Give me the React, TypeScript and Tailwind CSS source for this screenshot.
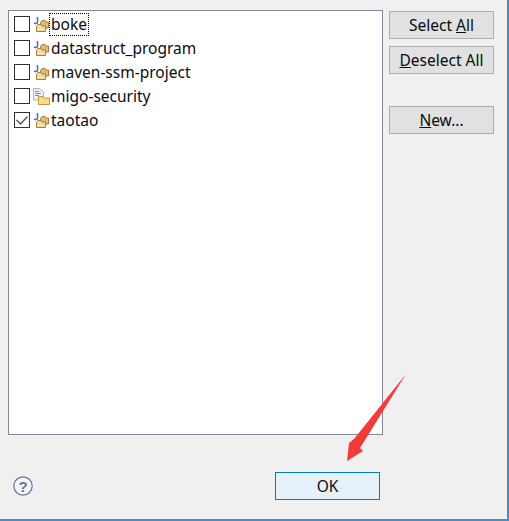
import React from "react";

const JavaFolder = () => (
  <svg width="17" height="17" viewBox="0 0 17 17" className="shrink-0">
    <path d="M4.5 1 L4.5 6 Q4.5 8 2.5 7.5 L1 7" fill="none" stroke="#3f74b5" strokeWidth="1.5" />
    <path d="M7.5 6.5 L9 4.5 H12 L13 6 H15.5 V12 H7.5 Z" fill="#e2bb73" stroke="#a37c38" strokeWidth="1" />
    <path d="M3.5 10.5 L5 8.5 H8 L9 10 H12.5 V15.5 H3.5 Z" fill="#f4dda6" stroke="#a37c38" strokeWidth="1" />
  </svg>
);

const PlainFolder = () => (
  <svg width="17" height="17" viewBox="0 0 17 17" className="shrink-0">
    <path d="M0.5 0.5 H6.5 L10.5 4 V12 H0.5 Z" fill="#eef1f6" stroke="#aab5c7" strokeWidth="1" />
    <path d="M2 3.5 H6 M2 5.5 H8 M2 7.5 H6" stroke="#7d93b8" strokeWidth="1" />
    <path d="M5.5 8.5 H9.5 L10.5 10 H16.5 V16.5 H5.5 Z" fill="#f9dd82" stroke="#b49a4c" strokeWidth="1" />
  </svg>
);

const Check = ({ checked }: { checked?: boolean }) => (
  <span className="w-4 h-4 border border-[#333333] bg-white flex items-center justify-center shrink-0">
    {checked && (
      <svg width="14" height="14" viewBox="0 0 14 14">
        <path d="M1.5 7 L5.5 11 L12.5 3.5" fill="none" stroke="#555555" strokeWidth="1.4" />
      </svg>
    )}
  </span>
);

const Row = ({ name, checked, plain, focused }: { name: string; checked?: boolean; plain?: boolean; focused?: boolean }) => (
  <div className="h-6 flex items-center">
    <Check checked={checked} />
    <span className="ml-[3px] w-[17px] flex justify-center">{plain ? <PlainFolder /> : <JavaFolder />}</span>
    <span className={`px-[1px] pt-[2px] h-[21px] flex items-center text-[#0a0a14] ${focused ? "outline-1 outline-dotted outline-black" : ""}`}>{name}</span>
  </div>
);

const Btn = ({ children, cls }: { children: React.ReactNode; cls?: string }) => (
  <button className={`w-[105px] h-7 pt-[2px] border border-[#adadad] bg-[#e1e1e1] text-[#0a0a14] flex items-center justify-center ${cls ?? ""}`}>{children}</button>
);

export default function App() {
  return (
    <div className="relative w-[509px] h-[521px] bg-[#f0f0f0] border-b-2 border-r-2 border-[#3f8fd2] text-[15.5px] leading-none overflow-hidden" style={{ fontFamily: '"Noto Sans", sans-serif' }}>
      <div className="flex pl-2 pt-[10px]">
        <div className="w-[375px] h-[425px] border border-[#82879b] bg-white pl-[5px] pt-[1px]">
          <Row name="boke" focused />
          <Row name="datastruct_program" />
          <Row name="maven-ssm-project" />
          <Row name="migo-security" plain />
          <Row name="taotao" checked />
        </div>
        <div className="ml-[6px] pt-[1px] flex flex-col">
          <Btn>Select&nbsp;<u>A</u>ll</Btn>
          <Btn cls="mt-[7px]"><u>D</u>eselect All</Btn>
          <Btn cls="mt-[32px]"><u>N</u>ew...</Btn>
        </div>
      </div>
      <div className="flex items-center justify-between pl-[13px] pr-[127px] mt-[37px]">
        <svg width="20" height="20" viewBox="0 0 20 20">
          <circle cx="10" cy="10" r="9.2" fill="#f4f5f8" stroke="#64759a" strokeWidth="1.2" />
          <text x="10" y="15.5" textAnchor="middle" fontSize="15" fontWeight="700" fill="#64759a" fontFamily="Liberation Sans">?</text>
        </svg>
        <button className="w-[105px] h-7 pt-[2px] border border-[#0078d7] bg-[#e5f1fb] text-[#0a0a14] flex items-center justify-center">OK</button>
      </div>
      <svg className="absolute left-[340px] top-[370px]" width="70" height="95" viewBox="0 0 70 95">
        <path d="M66 4 L14 69 L9 73 L7 91 L23 81 L20 78 Z" fill="#f53a3a" />
      </svg>
      <div className="absolute left-0 bottom-[-1px] w-[56px] border-t border-dotted border-[#222222]" />
    </div>
  );
}
